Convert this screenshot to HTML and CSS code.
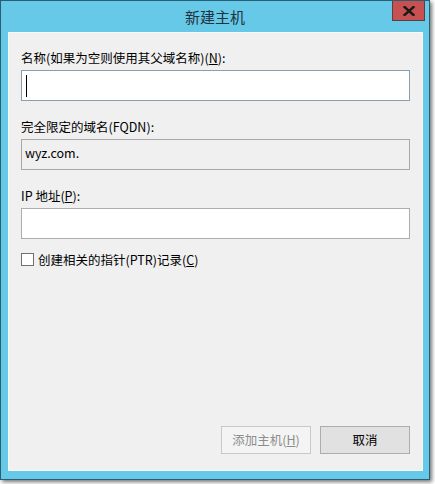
FILE: index.html
```html
<!DOCTYPE html>
<html lang="zh-CN">
<head>
<meta charset="utf-8">
<title>新建主机</title>
<link rel="stylesheet" href="styles.css">
</head>
<body>
<div class="window">
  <div class="titlebar">
    <span class="title">新建主机</span>
  </div>
  <div class="close" aria-label="关闭">
    <svg width="12" height="10" viewBox="0 0 12 10"><path d="M1.5 1 L10.5 9 M10.5 1 L1.5 9" stroke="#1a1a1a" stroke-width="2.4" stroke-linecap="square"/></svg>
  </div>
  <div class="content">
    <div class="form">
      <label class="label l1">名称(如果为空则使用其父域名称)(<u>N</u>):</label>
      <div class="input focused"><span class="caret"></span></div>
      <label class="label l2">完全限定的域名(FQDN):</label>
      <div class="input readonly">wyz.com.</div>
      <label class="label l2">IP 地址(<u>P</u>):</label>
      <div class="input"></div>
      <div class="check">
        <span class="box"></span>
        <span class="check-text">创建相关的指针(PTR)记录(<u>C</u>)</span>
      </div>
    </div>
    <div class="buttons">
      <div class="btn disabled">添加主机(<u>H</u>)</div>
      <div class="btn">取消</div>
    </div>
  </div>
</div>
</body>
</html>
```

FILE: styles.css
```css
html, body {
  margin: 0;
  padding: 0;
  background: #ffffff;
}
body {
  width: 435px;
  height: 484px;
  overflow: hidden;
  font-family: "Noto Sans CJK SC", sans-serif;
  font-size: 12px;
  color: #000;
}
.window {
  position: relative;
  box-sizing: border-box;
  width: 430px;
  height: 480px;
  background: #67c9e8;
  border: 1px solid #2b5d74;
  box-shadow: 2px 2px 4px rgba(0, 0, 0, 0.55);
  display: flex;
  flex-direction: column;
}
.titlebar {
  height: 31px;
  display: flex;
  align-items: center;
  justify-content: center;
}
.title {
  font-size: 15px;
  color: #1f3340;
  line-height: 20px;
}
.close {
  position: absolute;
  top: 0;
  right: 4px;
  width: 33px;
  height: 20px;
  box-sizing: border-box;
  background: #c75050;
  border: 1px solid #5a4045;
  border-top: none;
  display: flex;
  align-items: center;
  justify-content: center;
}
.content {
  margin: 0 6px 0 7px;
  width: 415px;
  height: 439px;
  box-sizing: border-box;
  background: #f0f0f0;
  border: 1px solid #f8f8f8;
  padding: 0 12px 16px 12px;
  display: flex;
  flex-direction: column;
  justify-content: space-between;
}
.form {
  display: flex;
  flex-direction: column;
  padding-top: 17px;
}
.label {
  line-height: 16px;
  height: 16px;
  display: block;
  font-size: 12.5px;
}
.l2 {
  margin-top: 18px;
}
.input {
  margin-top: 4px;
  height: 31px;
  box-sizing: border-box;
  background: #fff;
  border: 1px solid #abadb3;
  display: flex;
  align-items: center;
  padding-left: 3px;
  font-size: 12.5px;
}
.input.focused {
  border-color: #8b9dae;
}
.caret {
  display: block;
  width: 1px;
  height: 22px;
  background: #000;
  margin-left: 1px;
}
.input.readonly {
  background: #f0f0f0;
  border-color: #a8a8a8;
  padding-bottom: 4px;
}
.check {
  margin-top: 13px;
  display: flex;
  align-items: center;
  height: 15px;
}
.box {
  width: 13px;
  height: 13px;
  box-sizing: border-box;
  border: 1px solid #707070;
  background: #fff;
  margin-right: 4px;
}
.check-text {
  line-height: 16px;
  font-size: 12.5px;
}
.buttons {
  display: flex;
  justify-content: flex-end;
  gap: 9px;
}
.btn {
  width: 90px;
  height: 28px;
  box-sizing: border-box;
  background: #e1e1e1;
  border: 1px solid #adadad;
  display: flex;
  align-items: center;
  justify-content: center;
  line-height: 16px;
  font-size: 12.5px;
}
.btn.disabled {
  background: #f4f4f4;
  border-color: #c8c8c8;
  color: #8d8d8d;
}
```
